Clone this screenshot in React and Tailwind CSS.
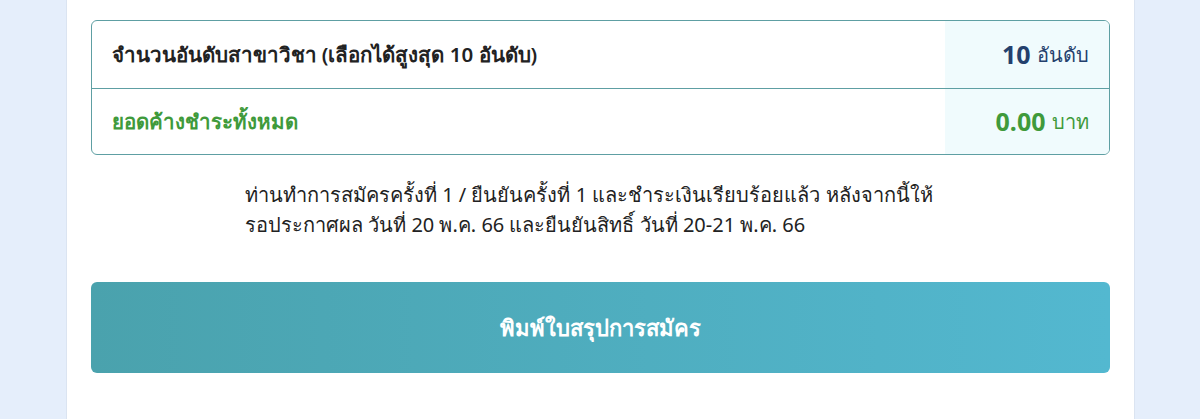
import React from 'react';

const App = () => {
  return (
    <div className="min-h-[419px] bg-[#e5eefb] flex justify-center" style={{ fontFamily: '"Noto Sans", "Open Sans", sans-serif' }}>
      <div className="w-[1069px] min-h-[419px] bg-white border-x border-[#dbe4f1] px-[24px] pt-[20px]">
        {/* summary table */}
        <div className="border border-[#5e9fa3] rounded-[6px] overflow-hidden">
          <div className="flex h-[68px] border-b border-[#5e9fa3]">
            <div className="flex-1 flex items-center pl-[20px] text-[20.5px] font-semibold text-[#222]">
              จำนวนอันดับสาขาวิชา (เลือกได้สูงสุด 10 อันดับ)
            </div>
            <div className="w-[164px] bg-[#f0fbfd] flex items-center justify-end pr-[20px]">
              <span className="text-[25px] font-bold text-[#24406d]">10</span>
              <span className="text-[20px] text-[#24406d] ml-[6px]">อันดับ</span>
            </div>
          </div>
          <div className="flex h-[65px]">
            <div className="flex-1 flex items-center pl-[20px] text-[20.5px] font-semibold text-[#3f9a3b]">
              ยอดค้างชำระทั้งหมด
            </div>
            <div className="w-[164px] bg-[#f0fbfd] flex items-center justify-end pr-[20px]">
              <span className="text-[25px] font-bold text-[#3f9a3b]">0.00</span>
              <span className="text-[20px] text-[#3f9a3b] ml-[6px]">บาท</span>
            </div>
          </div>
        </div>

        {/* note */}
        <p className="mx-auto w-[710px] mt-[25px] text-[20px] leading-[30px] text-[#222]">
          ท่านทำการสมัครครั้งที่ 1 / ยืนยันครั้งที่ 1 และชำระเงินเรียบร้อยแล้ว หลังจากนี้ให้
          <br />
          รอประกาศผล วันที่ 20 พ.ค. 66 และยืนยันสิทธิ์ วันที่ 20-21 พ.ค. 66
        </p>

        {/* print button */}
        <button className="mt-[42px] w-full h-[91px] rounded-[6px] bg-gradient-to-r from-[#4aa2ad] to-[#53b8d0] text-white text-[22px] font-semibold flex items-center justify-center">
          พิมพ์ใบสรุปการสมัคร
        </button>
      </div>
    </div>
  );
};

export default App;
